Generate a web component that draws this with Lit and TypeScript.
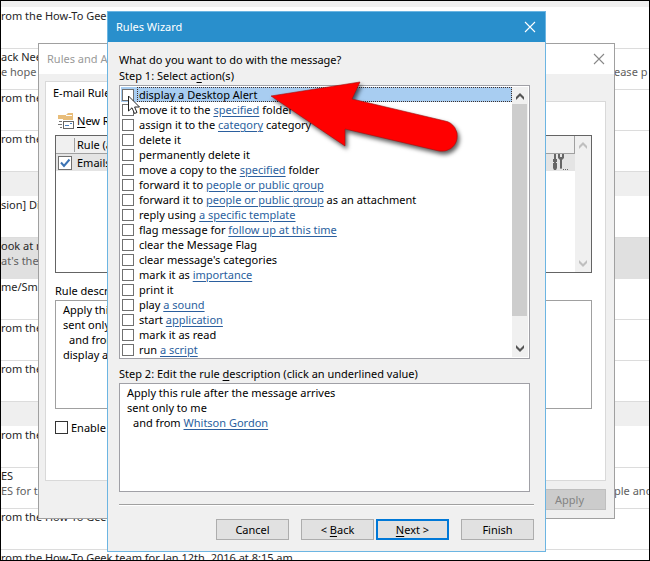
import { LitElement, html, css, svg, nothing } from "lit";
import { customElement } from "lit/decorators.js";
import { classMap } from "lit/directives/class-map.js";

type Part = string | { link: string };

interface Mail {
  kind?: "band" | "selected";
  subject?: string;
  preview?: string;
  tail?: string;
}

const geek = "rom the How-To Geek team for Jan 12th, 2016 at 8:15 am";

const mails: Mail[] = [
  { subject: geek },
  { subject: "ack Need", preview: "e hope you", tail: "ease p" },
  { subject: geek },
  { subject: geek },
  { kind: "band" },
  { subject: "sion] Discussion" },
  { kind: "selected", subject: "ook at my", preview: "at's the" },
  { subject: "me/Smart" },
  { subject: geek },
  { subject: geek },
  { kind: "band" },
  { subject: geek },
  { subject: "ES", preview: "ES for the", tail: "ple and" },
  { subject: geek },
  { subject: geek },
];

const actions: Part[][] = [
  ["display a Desktop Alert"],
  ["move it to the ", { link: "specified" }, " folder"],
  ["assign it to the ", { link: "category" }, " category"],
  ["delete it"],
  ["permanently delete it"],
  ["move a copy to the ", { link: "specified" }, " folder"],
  ["forward it to ", { link: "people or public group" }],
  ["forward it to ", { link: "people or public group" }, " as an attachment"],
  ["reply using ", { link: "a specific template" }],
  ["flag message for ", { link: "follow up at this time" }],
  ["clear the Message Flag"],
  ["clear message's categories"],
  ["mark it as ", { link: "importance" }],
  ["print it"],
  ["play ", { link: "a sound" }],
  ["start ", { link: "application" }],
  ["mark it as read"],
  ["run ", { link: "a script" }],
];

const renderPart = (part: Part) =>
  typeof part === "string" ? part : html`<a href="#">${part.link}</a>`;

const closeIcon = html`<svg width="12" height="12" viewBox="0 0 12 12" aria-hidden="true">
  <path d="M1 1L11 11M11 1L1 11" fill="none" stroke="currentColor" stroke-width="1.1" />
</svg>`;

const chevron = (direction: "up" | "down") => html`<svg width="8" height="7" viewBox="0 0 8 7" aria-hidden="true">
  ${direction === "up"
    ? svg`<path d="M0 4L4 0L8 4V7L4 3L0 7Z" fill="currentColor" />`
    : svg`<path d="M0 0L4 4L8 0V3L4 7L0 3Z" fill="currentColor" />`}
</svg>`;

const shared = css`
  * {
    box-sizing: border-box;
  }
  a {
    color: #2b5f9e;
    text-decoration: underline;
    text-underline-offset: 2px;
  }
  u {
    text-underline-offset: 2px;
  }
  button {
    font: inherit;
    color: inherit;
    padding: 0;
  }
  svg {
    display: block;
    flex: none;
  }
  .title {
    display: flex;
    align-items: center;
    justify-content: space-between;
    height: 30px;
    padding: 0 9px 1px 8px;
  }
  .title h1 {
    margin: 0;
    font: inherit;
  }
  .close {
    border: 0;
    background: none;
  }
  .push {
    width: 73px;
    height: 21px;
    border: 1px solid #adadad;
    background: #e1e1e1;
  }
  input[type="checkbox"] {
    appearance: none;
    flex: none;
    margin: 0;
    background: #fff;
    border: 1px solid #707070;
  }
  .scrollbar {
    display: flex;
    flex: none;
    flex-direction: column;
    align-items: center;
    background: #f0f0f0;
  }
`;

@customElement("mail-list")
export class MailList extends LitElement {
  static styles = [
    shared,
    css`
      :host {
        display: block;
      }
      .strip {
        height: 7px;
        background: #f0f0f0;
        border-bottom: 1px solid #fff;
      }
      .mail {
        display: flex;
        justify-content: space-between;
        height: 41px;
        border-bottom: 1px solid #dcdcdc;
        color: #262626;
      }
      .mail p {
        margin: 0;
      }
      .preview,
      .tail {
        color: #606060;
      }
      .tail {
        flex: none;
        width: 35px;
        padding-top: 15px;
        overflow: hidden;
      }
      .mail.band {
        height: 25px;
        background: #efefef;
        border-color: #fff;
      }
      .mail.selected {
        background: #e0e0e0;
        border-color: #e0e0e0;
      }
    `,
  ];

  render() {
    return html`
      <div class="strip"></div>
      ${mails.map(
        (mail) => html`<div class=${classMap({ mail: true, band: mail.kind === "band", selected: mail.kind === "selected" })}>
          <div>
            <p>${mail.subject}</p>
            ${mail.preview ? html`<p class="preview">${mail.preview}</p>` : nothing}
          </div>
          ${mail.tail ? html`<span class="tail">${mail.tail}</span>` : nothing}
        </div>`,
      )}
    `;
  }
}

@customElement("rules-alerts")
export class RulesAlerts extends LitElement {
  static styles = [
    shared,
    css`
      :host {
        display: block;
        box-sizing: border-box;
        border: 1px solid #a0a0a0;
        background: #f0f0f0;
      }
      .title {
        background: #fff;
        color: #999;
      }
      .close {
        color: #888;
      }
      .body {
        padding: 7px 8px 8px 6px;
      }
      .tab {
        position: relative;
        display: block;
        width: 98px;
        height: 21px;
        margin-bottom: -1px;
        padding-left: 7px;
        border: 1px solid #d9d9d9;
        border-bottom: 0;
        background: #fff;
        text-align: left;
      }
      .panel {
        height: 380px;
        padding: 0 13px 0 9px;
        border: 1px solid #d9d9d9;
        background: #fff;
      }
      .toolbar {
        height: 33px;
        padding: 11px 0 0 3px;
      }
      .new {
        display: flex;
        gap: 3px;
        height: 16px;
        border: 0;
        background: none;
      }
      .list {
        display: flex;
        height: 138px;
        border: 1px solid #646464;
      }
      .rules {
        flex: 1;
        height: 35px;
        border-spacing: 0;
      }
      .rules th,
      .rules td {
        padding: 0;
        text-align: left;
        font-weight: normal;
      }
      .rules th {
        height: 18px;
        background: #f0f0f0;
        border-bottom: 1px solid #a0a0a0;
      }
      .rules th:last-child {
        border-right: 1px solid #a0a0a0;
      }
      .rules td {
        height: 17px;
        background: #e4e4e4;
      }
      .rules .pick {
        width: 21px;
        padding-left: 2px;
      }
      .rules .split {
        display: block;
        width: 1px;
        height: 14px;
        margin-left: 16px;
        background: #a0a0a0;
      }
      .rules .tools {
        width: 24px;
      }
      .tick {
        display: grid;
        width: 14px;
      }
      .tick > * {
        grid-area: 1 / 1;
      }
      .tick input {
        width: 14px;
        height: 14px;
      }
      .scrollbar {
        justify-content: space-between;
        width: 16px;
        padding: 6px 0 5px;
        color: #bfbfbf;
      }
      .caption {
        margin: 10px 0 1px;
        line-height: 16px;
      }
      .text {
        height: 109px;
        padding: 1px 7px;
        border: 1px solid #a0a0a0;
      }
      .text p {
        margin: 0;
      }
      .text .deep {
        padding-left: 6px;
      }
      .enable {
        display: flex;
        align-items: center;
        gap: 3px;
        height: 15px;
        margin-top: 11px;
      }
      .enable input {
        width: 13px;
        height: 13px;
        border-color: #333;
      }
      .apply {
        display: block;
        margin: 8px 0 0 auto;
        background: #ccc;
        border-color: #bfbfbf;
        color: #838383;
      }
    `,
  ];

  render() {
    return html`
      <header class="title">
        <h1>Rules and Alerts</h1>
        <button class="close" aria-label="Close">${closeIcon}</button>
      </header>
      <div class="body">
        <button class="tab">E-mail Rules</button>
        <section class="panel">
          <div class="toolbar">
            <button class="new">
              <svg width="16" height="16" viewBox="0 0 16 16" aria-hidden="true">
                <path d="M0 6V2H8L10 0H15V9H5V6Z" fill="#e8bd7a" />
                <path d="M8 2.500H14" stroke="#fff" fill="none" />
                <rect x="4" y="7" width="12" height="9" fill="#fff" />
                <rect x="5.500" y="8.500" width="10" height="7" fill="#fff" stroke="#666" />
                <path d="M12 10.500H14M7 12.500H11" stroke="#4a7ebb" />
                <path d="M1 8.500H4M0 11.500H4M2 14.500H4" stroke="#777" />
              </svg>
              <span><u>N</u>ew Rule...</span>
            </button>
          </div>
          <div class="list">
            <table class="rules">
              <tr>
                <th class="pick"><span class="split"></span></th>
                <th>Rule (applied in the order shown)</th>
                <th class="tools"></th>
              </tr>
              <tr>
                <td class="pick">
                  <span class="tick">
                    <input type="checkbox" aria-label="Emails" checked />
                    <svg width="14" height="14" viewBox="0 0 14 14" aria-hidden="true">
                      <path d="M3 6.500L6 10L11.500 3.500" fill="none" stroke="#3b73b4" stroke-width="2" />
                    </svg>
                  </span>
                </td>
                <td>Emails</td>
                <td class="tools">
                  <svg width="17" height="17" viewBox="0 0 17 17" aria-hidden="true">
                    <path d="M3 0H5V5H6V8H5V9H6V14L5 16H3L2 14V9H3V8H2V5H3Z" fill="#666" />
                    <path d="M7 0H9V3H11V0H13V4L11 6V14Q10 16 9 14V6L7 4Z" fill="#666" />
                    <path d="M12 15.500H13M14 15.500H15M16 15.500H17" stroke="#666" />
                  </svg>
                </td>
              </tr>
            </table>
            <div class="scrollbar">${chevron("up")}${chevron("down")}</div>
          </div>
          <p class="caption">Rule description (click an underlined value to edit):</p>
          <div class="text">
            <p>Apply this rule after the message arrives</p>
            <p>sent only to me</p>
            <p class="deep">and from Whitson Gordon</p>
            <p>display a Desktop Alert</p>
          </div>
          <label class="enable"><input type="checkbox" />Enable rules on all messages</label>
        </section>
        <button class="push apply" disabled>Apply</button>
      </div>
    `;
  }
}

@customElement("rules-wizard")
export class RulesWizard extends LitElement {
  static styles = [
    shared,
    css`
      :host {
        display: block;
        box-sizing: border-box;
        border: 1px solid #6cb5e2;
        background: #f0f0f0;
      }
      .title {
        background: #298fcc;
        color: #fff;
      }
      .body {
        padding: 10px 11px 11px;
      }
      .line {
        margin: 0;
        line-height: 16px;
      }
      .list,
      .text {
        margin: 1px 4px 0 0;
        background: #fff;
        border: 1px solid #a0a0a6;
      }
      .list {
        display: flex;
        padding: 1px;
        margin-bottom: 7px;
      }
      .items {
        flex: 1;
        min-width: 0;
      }
      .item {
        display: flex;
        align-items: center;
        gap: 3px;
        height: 15px;
        padding: 1px 0 0 1px;
      }
      .item input {
        width: 12px;
        height: 12px;
      }
      .item .label {
        flex: 1;
        padding: 0 0 0 2px;
        line-height: 15px;
        margin-top: -1px;
      }
      .item.current {
        background: #a8cdf1;
      }
      .item.current .label {
        outline: 1px dotted #40302a;
        outline-offset: -1px;
      }
      .list .scrollbar {
        width: 16px;
        color: #555;
        padding: 6px 0 5px;
        gap: 4px;
      }
      .thumb {
        flex: none;
        align-self: flex-start;
        width: 15px;
        height: 212px;
        background: #cdcdcd;
      }
      .down {
        margin-top: auto;
      }
      .text {
        height: 109px;
        padding: 1px 7px;
      }
      .text p {
        margin: 0;
      }
      .text .deep {
        padding-left: 6px;
      }
      .rule {
        height: 2px;
        margin: 12px 0 13px;
        border: 0;
        border-top: 1px solid #a0a0a0;
        border-bottom: 1px solid #fff;
      }
      .buttons {
        display: flex;
        justify-content: flex-end;
        gap: 12px;
      }
      .pair {
        display: flex;
        gap: 2px;
      }
      .primary {
        border: 2px solid #0078d7;
      }
      .arrow,
      .cursor {
        position: absolute;
        pointer-events: none;
      }
      .arrow {
        left: 157px;
        top: 63px;
        filter: drop-shadow(2px 3px 2px #000000a0);
      }
      .cursor {
        left: 20px;
        top: 83px;
      }
    `,
  ];

  render() {
    return html`
      <header class="title">
        <h1>Rules Wizard</h1>
        <button class="close" aria-label="Close">${closeIcon}</button>
      </header>
      <div class="body">
        <p class="line">What do you want to do with the message?</p>
        <p class="line">Step 1: Select a<u>c</u>tion(s)</p>
        <div class="list">
          <div class="items">
            ${actions.map(
              (parts, index) => html`<label class=${classMap({ item: true, current: index === 0 })}>
                <input type="checkbox" /><span class="label">${parts.map(renderPart)}</span>
              </label>`,
            )}
          </div>
          <div class="scrollbar">
            ${chevron("up")}
            <div class="thumb"></div>
            <div class="down">${chevron("down")}</div>
          </div>
        </div>
        <p class="line">Step 2: Edit the rule <u>d</u>escription (click an underlined value)</p>
        <div class="text">
          <p>Apply this rule after the message arrives</p>
          <p>sent only to me</p>
          <p class="deep">and from <a href="#">Whitson Gordon</a></p>
        </div>
        <hr class="rule" />
        <div class="buttons">
          <button class="push">Cancel</button>
          <div class="pair">
            <button class="push">&lt; <u>B</u>ack</button>
            <button class="push primary"><u>N</u>ext &gt;</button>
          </div>
          <button class="push">Finish</button>
        </div>
      </div>
      <svg class="arrow" width="200" height="90" viewBox="0 0 200 90" aria-hidden="true">
        <path d="M6 21L95 7L87 24L180 46A15 15 0 0 1 174 76L80 54V71Z" fill="#f00" stroke="#a01010" stroke-width="0.6" />
      </svg>
      <svg class="cursor" width="13" height="20" viewBox="0 0 13 20" aria-hidden="true">
        <path d="M0.500 1V16L4 12.800L6.500 18.500L9 17.500L6.600 12H11.500Z" fill="#fff" stroke="#222" />
      </svg>
    `;
  }
}

@customElement("app-root")
export class AppRoot extends LitElement {
  static styles = css`
    :host {
      display: block;
      position: relative;
      box-sizing: border-box;
      height: 100vh;
      overflow: hidden;
      border: 1px solid #000;
      background: #fff;
      color: #000;
      font: 11px/15px "Noto Sans", "Open Sans", sans-serif;
      white-space: nowrap;
    }
    rules-alerts,
    rules-wizard {
      position: absolute;
    }
    rules-alerts {
      top: 42px;
      left: 37px;
      right: 34px;
    }
    rules-wizard {
      top: 10px;
      left: 106px;
      right: 103px;
    }
  `;

  render() {
    return html`
      <mail-list></mail-list>
      <rules-alerts></rules-alerts>
      <rules-wizard></rules-wizard>
    `;
  }
}
